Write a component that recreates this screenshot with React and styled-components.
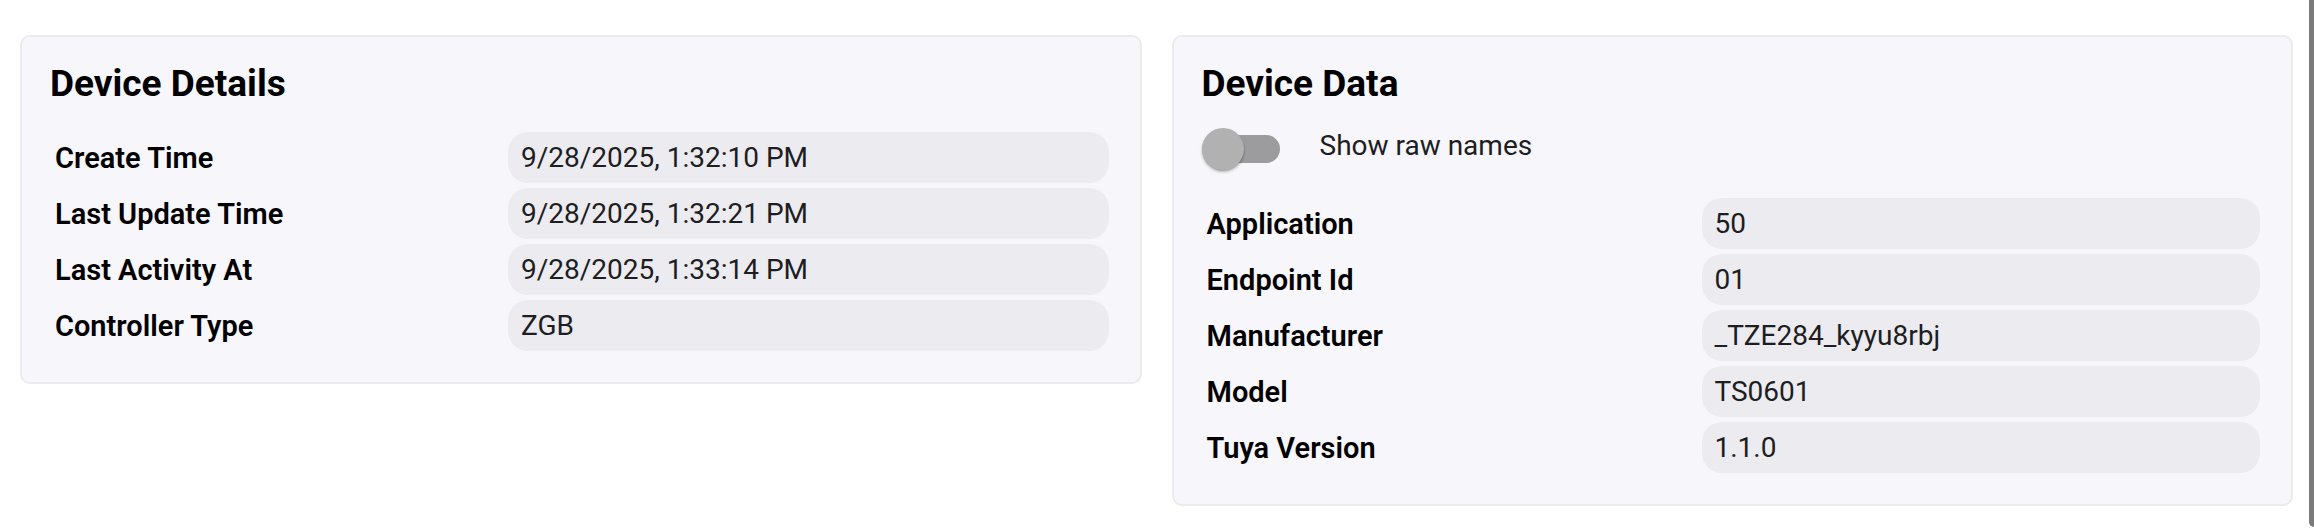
import styled, { createGlobalStyle } from "styled-components";

const detailRows = [
    { label: "Create Time", value: "9/28/2025, 1:32:10 PM" },
    { label: "Last Update Time", value: "9/28/2025, 1:32:21 PM" },
    { label: "Last Activity At", value: "9/28/2025, 1:33:14 PM" },
    { label: "Controller Type", value: "ZGB" },
];

const dataRows = [
    { label: "Application", value: "50" },
    { label: "Endpoint Id", value: "01" },
    { label: "Manufacturer", value: "_TZE284_kyyu8rbj" },
    { label: "Model", value: "TS0601" },
    { label: "Tuya Version", value: "1.1.0" },
];

export default function App() {
    return (
        <>
            <GlobalStyle />
            <Page>
                <Main>
                    <Card>
                        <Title>Device Details</Title>
                        <InfoGrid rows={detailRows} labelWidth={458} />
                    </Card>
                    <Card>
                        <Title>Device Data</Title>
                        <ToggleRow>
                            <Switch role="switch" aria-checked="false">
                                <Track />
                                <Thumb />
                            </Switch>
                            <ToggleLabel>Show raw names</ToggleLabel>
                        </ToggleRow>
                        <InfoGrid rows={dataRows} labelWidth={500} />
                    </Card>
                </Main>
                <ScrollThumb />
            </Page>
        </>
    );
}

function InfoGrid({ rows, labelWidth }) {
    return (
        <Grid $labelWidth={labelWidth}>
            {rows.map((row) => (
                <Row key={row.label}>
                    <Label>{row.label}</Label>
                    <Value>{row.value}</Value>
                </Row>
            ))}
        </Grid>
    );
}

const colors = {
    card: "#f7f6fb",
    cardBorder: "#ebebef",
    pill: "#ecebf0",
    text: "#000000",
    value: "#1e1e22",
};

const GlobalStyle = createGlobalStyle`
    html, body {
        margin: 0;
        padding: 0;
        background: #ffffff;
        font-family: Roboto, "Liberation Sans", Arial, sans-serif;
    }
`;

const Page = styled.div`
    display: flex;
    align-items: flex-start;
    min-height: 528px;
`;

const Main = styled.div`
    flex: 1;
    display: grid;
    grid-template-columns: 1fr 1fr;
    gap: 30px;
    align-items: start;
    padding: 35px 16px 0 20px;
`;

const ScrollThumb = styled.div`
    width: 5px;
    height: 527px;
    background: #7b7b7b;
    border-bottom-left-radius: 6px;
`;

const Card = styled.section`
    background: ${colors.card};
    border: 2px solid ${colors.cardBorder};
    border-radius: 10px;
    padding: 26px 31px 31px 28px;
`;

const Title = styled.h2`
    margin: 0;
    font-size: 37px;
    line-height: 42px;
    font-weight: 700;
    color: ${colors.text};
`;

const ToggleRow = styled.div`
    display: flex;
    align-items: center;
    height: 44px;
    margin-top: 22px;
`;

const Switch = styled.div`
    position: relative;
    width: 78px;
    height: 42px;
    display: flex;
    align-items: center;
`;

const Track = styled.div`
    margin-left: 8px;
    width: 70px;
    height: 28px;
    border-radius: 14px;
    background: #9c9c9e;
`;

const Thumb = styled.div`
    position: absolute;
    left: 0;
    top: 0;
    width: 42px;
    height: 42px;
    border-radius: 50%;
    background: #b1b1b1;
    box-shadow: 0 2px 3px rgba(0, 0, 0, 0.25), 0 1px 1px rgba(0, 0, 0, 0.14);
`;

const ToggleLabel = styled.span`
    margin-left: 40px;
    margin-bottom: 8px;
    font-size: 28px;
    color: ${colors.value};
`;

const Grid = styled.div`
    display: grid;
    grid-template-columns: ${(p) => p.$labelWidth}px 1fr;
    row-gap: 5px;
    margin-top: 27px;
`;

const Row = styled.div`
    display: contents;
`;

const Label = styled.div`
    display: flex;
    align-items: center;
    padding-left: 5px;
    font-size: 29px;
    font-weight: 600;
    color: ${colors.text};
`;

const Value = styled.div`
    display: flex;
    align-items: center;
    height: 51px;
    padding-left: 13px;
    border-radius: 20px;
    background: ${colors.pill};
    font-size: 28px;
    color: ${colors.value};
`;
